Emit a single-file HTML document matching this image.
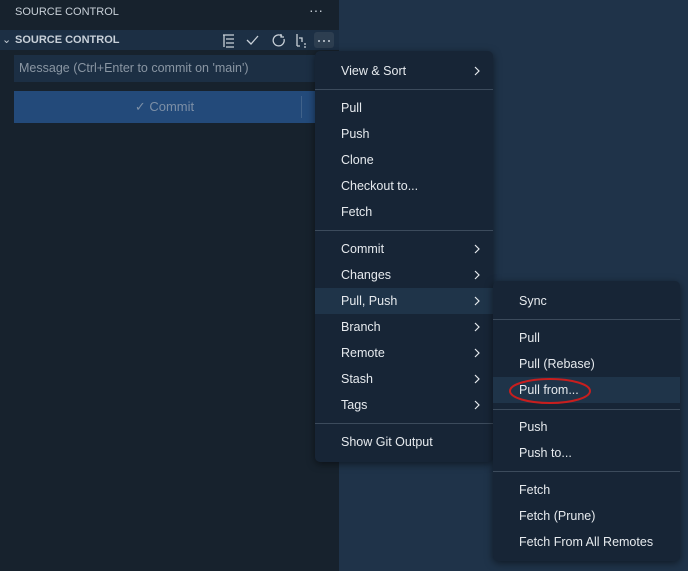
<!DOCTYPE html>
<html><head><style>
body{margin:0;width:688px;height:571px;background:#1f3349;font-family:"Liberation Sans",sans-serif;position:relative;overflow:hidden}
.side{position:absolute;left:0;top:0;width:339px;height:571px;background:#17222d}
.t{position:absolute;color:#c8d0d8;font-size:11px}
.menu{position:absolute;background:#172536;border-radius:5px;box-shadow:0 2px 8px rgba(0,0,0,.5)}
.it{position:absolute;left:0;right:0;height:26px;line-height:26px;color:#e6eaee;font-size:12.5px;padding-left:26px}
.it .a{position:absolute;right:13px;top:8px;width:6px;height:10px}
.sep{position:absolute;left:0;right:0;height:1px;background:#3c4b5c}
.hov{background:#1f3449}
</style></head><body>
<svg width="0" height="0" style="position:absolute"><defs><symbol id="ch" viewBox="0 0 6 10"><path d="M1 1l4 4-4 4" fill="none" stroke="#e6eaee" stroke-width="1.2"/></symbol></defs></svg>
<div class="side"></div>
<div class="t" style="left:15px;top:6px">SOURCE CONTROL</div>
<div class="t" style="left:309px;top:2px;font-size:14px">···</div>
<div style="position:absolute;left:0;top:30px;width:339px;height:20px;background:#1c2f44"></div>
<div class="t" style="left:2px;top:33px;font-size:11px">⌄</div>
<div class="t" style="left:15px;top:34px;font-weight:bold">SOURCE CONTROL</div>
<svg style="position:absolute;left:220px;top:32px" width="120" height="16" fill="none" stroke="#c8d0d8" stroke-width="1.3">
<path d="M3 3h11M6 7h8M6 11h8M6 15h8M4 3v12"/>
<path d="M27 8l4 4 7-8"/>
<path d="M62 4a5.5 5.5 0 1 0 2 3M61 2v3h3"/>
<path d="M77 2v12M79 6h3v4M77 14h3M84 12h2M84 15h2"/>
<rect x="94" y="0" width="20" height="16" rx="3" fill="#2d3e50" stroke="none"/>
<circle cx="99" cy="9" r="1" fill="#c8d0d8" stroke="none"/><circle cx="104" cy="9" r="1" fill="#c8d0d8" stroke="none"/><circle cx="109" cy="9" r="1" fill="#c8d0d8" stroke="none"/>
</svg>
<div style="position:absolute;left:14px;top:55px;width:301px;height:27px;background:#1c2f44;color:#8a96a3;font-size:12.5px;line-height:27px;padding-left:5px;box-sizing:border-box">Message (Ctrl+Enter to commit on 'main')</div>
<div style="position:absolute;left:14px;top:91px;width:301px;height:32px;background:#234a7a;color:#7c8fa6;font-size:13px;line-height:32px;text-align:center">✓ Commit</div>
<div style="position:absolute;left:301px;top:96px;width:1px;height:22px;background:#40628a"></div>

<div class="menu" style="left:315px;top:51px;width:178px;height:411px">
<div class="it" style="top:7px">View &amp; Sort<svg class="a"><use href="#ch"/></svg></div>
<div class="sep" style="top:38px"></div>
<div class="it" style="top:44px">Pull</div>
<div class="it" style="top:70px">Push</div>
<div class="it" style="top:96px">Clone</div>
<div class="it" style="top:122px">Checkout to...</div>
<div class="it" style="top:148px">Fetch</div>
<div class="sep" style="top:179px"></div>
<div class="it" style="top:185px">Commit<svg class="a"><use href="#ch"/></svg></div>
<div class="it" style="top:211px">Changes<svg class="a"><use href="#ch"/></svg></div>
<div class="it hov" style="top:237px">Pull, Push<svg class="a"><use href="#ch"/></svg></div>
<div class="it" style="top:263px">Branch<svg class="a"><use href="#ch"/></svg></div>
<div class="it" style="top:289px">Remote<svg class="a"><use href="#ch"/></svg></div>
<div class="it" style="top:315px">Stash<svg class="a"><use href="#ch"/></svg></div>
<div class="it" style="top:341px">Tags<svg class="a"><use href="#ch"/></svg></div>
<div class="sep" style="top:372px"></div>
<div class="it" style="top:378px">Show Git Output</div>
</div>

<div class="menu" style="left:493px;top:281px;width:187px;height:280px">
<div class="it" style="top:7px">Sync</div>
<div class="sep" style="top:38px"></div>
<div class="it" style="top:44px">Pull</div>
<div class="it" style="top:70px">Pull (Rebase)</div>
<div class="it hov" style="top:96px">Pull from...</div>
<div class="sep" style="top:128px"></div>
<div class="it" style="top:133px">Push</div>
<div class="it" style="top:159px">Push to...</div>
<div class="sep" style="top:190px"></div>
<div class="it" style="top:196px">Fetch</div>
<div class="it" style="top:222px">Fetch (Prune)</div>
<div class="it" style="top:248px">Fetch From All Remotes</div>
</div>
<svg style="position:absolute;left:507px;top:376px" width="90" height="32"><ellipse cx="43" cy="15" rx="40" ry="12" fill="none" stroke="#c81e1e" stroke-width="2"/></svg>
</body></html>
